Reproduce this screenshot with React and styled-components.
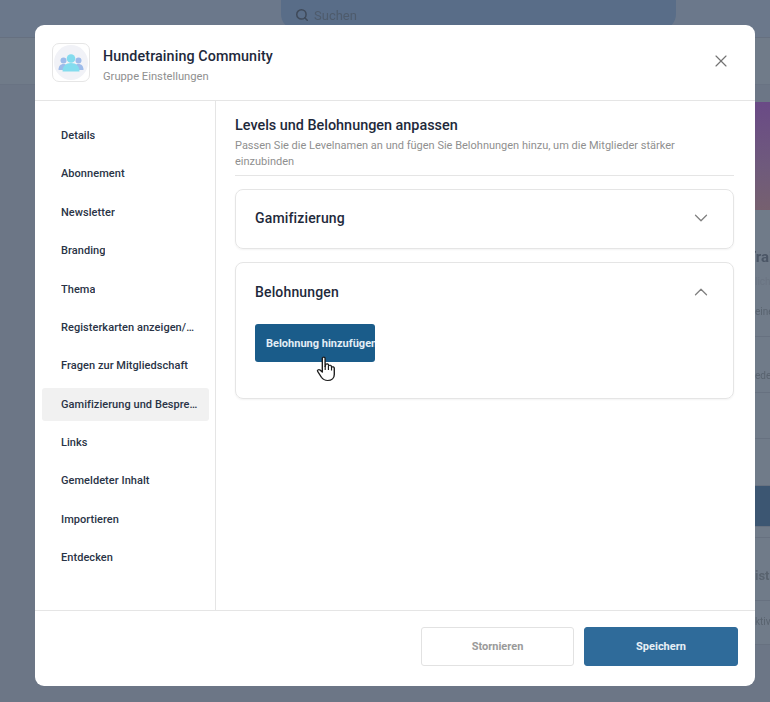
import React from "react";
import styled, { createGlobalStyle } from "styled-components";
import { ChevronDown, ChevronUp, Search, X } from "lucide-react";

const Global = createGlobalStyle`
  html, body {
    margin: 0;
    padding: 0;
    height: 100%;
    overflow: hidden;
    font-family: Roboto, "Liberation Sans", sans-serif;
    background: #6c7686;
  }
`;

const Backdrop = styled.div`
  position: relative;
  width: 770px;
  height: 702px;
  overflow: hidden;
  background: #6c7686;
`;

const TopBar = styled.div`
  height: 38px;
  display: flex;
  padding-left: 281px;
  box-sizing: border-box;
  background: #6b788b;
  border-bottom: 1px solid #667080;
`;

const SearchPill = styled.div`
  width: 395px;
  height: 30px;
  border-radius: 0 0 16px 16px;
  background: #596d88;
  display: flex;
  align-items: center;
  gap: 5px;
  padding-left: 14px;
  box-sizing: border-box;
  color: #4e5b6c;
  font-size: 13px;
  filter: blur(0.6px);
`;

const SubBar = styled.div`
  height: 47px;
  box-sizing: border-box;
  background: #707b89;
  border-bottom: 1px solid #697383;
`;

const BackColumn = styled.div`
  width: 36px;
  margin: 17px 0 0 auto;
  display: flex;
  flex-direction: column;
  filter: blur(0.7px);
`;

const Banner = styled.div`
  height: 108px;
  background: linear-gradient(180deg, #6a4a86 0%, #6f5a7c 60%, #76606f 100%);
`;

const BackRow = styled.div`
  height: ${p => p.$h}px;
  box-sizing: border-box;
  padding: ${p => p.$pad || 0}px 0 0 ${p => p.$left || 21}px;
  background: ${p => p.$bg || "#707b89"};
  border-bottom: 1px solid #677180;
  color: #59636f;
  font-size: ${p => p.$size || 10}px;
  line-height: ${p => p.$line || 14}px;
  font-weight: ${p => p.$weight || 400};
  white-space: nowrap;
  overflow: hidden;
`;

const BackHeading = styled.div`
  font-size: 15px;
  line-height: 18px;
  font-weight: 700;
  color: #4b5666;
  margin-left: -8px;
`;

const BackLine = styled.div`
  font-size: 10px;
  line-height: 14px;
  margin-top: ${p => p.$top}px;
  color: ${p => p.$color || "#59636f"};
`;

const Modal = styled.div`
  position: absolute;
  left: 35px;
  top: 25px;
  width: 720px;
  height: 661px;
  background: #fff;
  border-radius: 9px;
  display: flex;
  flex-direction: column;
  overflow: hidden;
`;

const Header = styled.header`
  height: 76px;
  flex: none;
  box-sizing: border-box;
  display: flex;
  align-items: center;
  gap: 13px;
  padding: 0 24px 0 17px;
  border-bottom: 1px solid #e5e5e5;
`;

const Logo = styled.div`
  width: 38px;
  height: 39px;
  box-sizing: border-box;
  border: 1px solid #e6e6e6;
  border-radius: 7px;
  display: flex;
  align-items: center;
  justify-content: center;
`;

const LogoDisc = styled.div`
  width: 34px;
  height: 35px;
  border-radius: 50%;
  background: #f1f2f7;
  display: flex;
  align-items: center;
  justify-content: center;
`;

const HeaderText = styled.div`
  flex: 1;
  display: flex;
  flex-direction: column;
  gap: 4px;
  padding-top: 5px;
`;

const Title = styled.div`
  font-size: 14.3px;
  line-height: 20px;
  font-weight: 500;
  color: #1e293b;
  letter-spacing: 0.1px;
`;

const Subtitle = styled.div`
  font-size: 11.2px;
  line-height: 14px;
  color: #8f8f8f;
`;

const CloseButton = styled.button`
  border: 0;
  background: none;
  padding: 0;
  margin-bottom: 4px;
  display: flex;
  color: #737373;
`;

const Body = styled.div`
  flex: 1;
  min-height: 0;
  display: flex;
`;

const Sidebar = styled.nav`
  width: 181px;
  flex: none;
  box-sizing: border-box;
  border-right: 1px solid #e5e5e5;
  padding: 18.1px 6px 0 7px;
  display: flex;
  flex-direction: column;
  gap: 5.36px;
`;

const NavItem = styled.div`
  height: 33px;
  flex: none;
  box-sizing: border-box;
  display: flex;
  align-items: center;
  padding: 0 10px 0 19px;
  border-radius: 3px;
  font-size: 11px;
  font-weight: 500;
  letter-spacing: 0.05px;
  color: #2a3446;
  background: ${p => (p.$active ? "#f1f1f1" : "transparent")};
`;

const NavLabel = styled.span`
  overflow: hidden;
  white-space: nowrap;
  text-overflow: ellipsis;
`;

const Content = styled.main`
  flex: 1;
  min-width: 0;
  box-sizing: border-box;
  padding: 16px 21px 0 19px;
  display: flex;
  flex-direction: column;
`;

const SectionHead = styled.div`
  border-bottom: 1px solid #e5e5e5;
  padding-bottom: 5px;
  margin-bottom: 13px;
`;

const SectionTitle = styled.h2`
  margin: 0 0 3px;
  font-size: 14.4px;
  line-height: 18px;
  font-weight: 500;
  color: #1e293b;
`;

const SectionText = styled.p`
  margin: 0;
  font-size: 11px;
  line-height: 16px;
  color: #8f8f8f;
`;

const Card = styled.section`
  border: 1px solid #e5e5e5;
  border-radius: 8px;
  box-shadow: 0 1px 2px rgba(0, 0, 0, 0.05);
  margin-bottom: 13px;
  padding: 0 21px 0 19px;
`;

const CardHead = styled.div`
  height: ${p => p.$h}px;
  box-sizing: border-box;
  padding-bottom: ${p => p.$nudge || 0}px;
  display: flex;
  align-items: center;
  justify-content: space-between;
  font-size: 14px;
  font-weight: 500;
  color: #1e293b;
  letter-spacing: 0.15px;
  svg {
    color: #808080;
  }
`;

const CardBody = styled.div`
  position: relative;
  padding: 4px 0 36px;
`;

const AddButton = styled.button`
  display: block;
  width: 120px;
  height: 38px;
  border: 0;
  border-radius: 3px;
  background: #1a5c8a;
  color: #e3eef6;
  font: 700 11px Roboto, "Liberation Sans", sans-serif;
  padding: 0 0 0 11px;
  text-align: left;
  white-space: nowrap;
  overflow: hidden;
`;

const Cursor = styled.svg`
  position: absolute;
  left: 61px;
  top: 36px;
`;

const Footer = styled.footer`
  height: 76px;
  flex: none;
  box-sizing: border-box;
  border-top: 1px solid #e5e5e5;
  display: flex;
  justify-content: flex-end;
  align-items: flex-start;
  gap: 10px;
  padding: 16px 17px 0 0;
`;

const FooterButton = styled.button`
  width: ${p => (p.$primary ? 154 : 153)}px;
  height: 39px;
  box-sizing: border-box;
  border-radius: 3px;
  font: 700 11px Roboto, "Liberation Sans", sans-serif;
  border: 1px solid ${p => (p.$primary ? "#2f6b9a" : "#e2e2e2")};
  background: ${p => (p.$primary ? "#2f6b9a" : "#fff")};
  color: ${p => (p.$primary ? "#e8f0f6" : "#9a9a9a")};
`;

const navItems = [
  "Details",
  "Abonnement",
  "Newsletter",
  "Branding",
  "Thema",
  "Registerkarten anzeigen/ausblenden",
  "Fragen zur Mitgliedschaft",
  "Gamifizierung und Besprechungen",
  "Links",
  "Gemeldeter Inhalt",
  "Importieren",
  "Entdecken",
];

const GroupIcon = () => (
  <svg width="26" height="18" viewBox="0 0 26 18">
    <circle cx="5.500" cy="6.500" r="3" fill="#9dbbea" />
    <path d="M0.500 16c0-4 2-6 5-6s5 2 5 6z" fill="#9dbbea" />
    <circle cx="20.500" cy="6.500" r="3" fill="#9dbbea" />
    <path d="M15.500 16c0-4 2-6 5-6s5 2 5 6z" fill="#9dbbea" />
    <circle cx="13" cy="4.500" r="4.300" fill="#84dcee" />
    <path d="M4.500 17.500c0-5.500 3.500-8.500 8.500-8.500s8.500 3 8.500 8.500z" fill="#84dcee" />
  </svg>
);

const HandCursor = () => (
  <Cursor width="23" height="26" viewBox="0 0 20 26" preserveAspectRatio="none">
    <path
      d="M5.500 2.200c0-1.500 2.400-1.500 2.400 0v8.300l.6-2.300c.9-.7 2.100-.4 2.300.6l.3.900c.8-.8 2.100-.5 2.300.6l.2.800c.9-.6 2.200-.2 2.300 1v6.400c0 3.600-2.300 6-5.700 6-2.800 0-4.300-1.200-5.500-3.200L1.500 15.500c-.8-1.300.8-2.600 2-1.500l2 2z"
      fill="#fff"
      stroke="#1d1d1d"
      strokeWidth="1.200"
      strokeLinejoin="round"
    />
    <path d="M8 10v4M10.800 10v4M13.500 11v3.500" stroke="#1d1d1d" strokeWidth="1" fill="none" />
  </Cursor>
);

export default function App() {
  return (
    <Backdrop>
      <Global />
      <TopBar>
        <SearchPill>
          <Search size={14} strokeWidth={2.6} color="#3f4a5a" />
          Suchen
        </SearchPill>
      </TopBar>
      <SubBar />
      <BackColumn>
        <Banner />
        <BackRow $h={127} $pad={38}>
          <BackHeading>Training</BackHeading>
          <BackLine $top={9} $color="#6a7482">lich</BackLine>
          <BackLine $top={16}>eine</BackLine>
        </BackRow>
        <BackRow $h={56} $pad={32}>ede</BackRow>
        <BackRow $h={46} />
        <BackRow $h={47} />
        <BackRow $h={41} $bg="#3c5672" />
        <BackRow $h={11} />
        <BackRow $h={63} $pad={30} $size={13} $line={16} $weight={700}>iste</BackRow>
        <BackRow $h={44} $pad={14}>ktiv</BackRow>
      </BackColumn>

      <Modal>
        <Header>
          <Logo>
            <LogoDisc>
              <GroupIcon />
            </LogoDisc>
          </Logo>
          <HeaderText>
            <Title>Hundetraining Community</Title>
            <Subtitle>Gruppe Einstellungen</Subtitle>
          </HeaderText>
          <CloseButton>
            <X size={20} strokeWidth={1.4} />
          </CloseButton>
        </Header>

        <Body>
          <Sidebar>
            {navItems.map((item, i) => (
              <NavItem key={item} $active={i === 7}>
                <NavLabel>{item}</NavLabel>
              </NavItem>
            ))}
          </Sidebar>

          <Content>
            <SectionHead>
              <SectionTitle>Levels und Belohnungen anpassen</SectionTitle>
              <SectionText>
                Passen Sie die Levelnamen an und fügen Sie Belohnungen hinzu, um die Mitglieder stärker einzubinden
              </SectionText>
            </SectionHead>

            <Card>
              <CardHead $h={58} $nudge={2}>
                Gamifizierung
                <ChevronDown size={22} strokeWidth={1.4} />
              </CardHead>
            </Card>

            <Card>
              <CardHead $h={57}>
                Belohnungen
                <ChevronUp size={22} strokeWidth={1.4} />
              </CardHead>
              <CardBody>
                <AddButton>Belohnung hinzufügen</AddButton>
                <HandCursor />
              </CardBody>
            </Card>
          </Content>
        </Body>

        <Footer>
          <FooterButton>Stornieren</FooterButton>
          <FooterButton $primary>Speichern</FooterButton>
        </Footer>
      </Modal>
    </Backdrop>
  );
}
